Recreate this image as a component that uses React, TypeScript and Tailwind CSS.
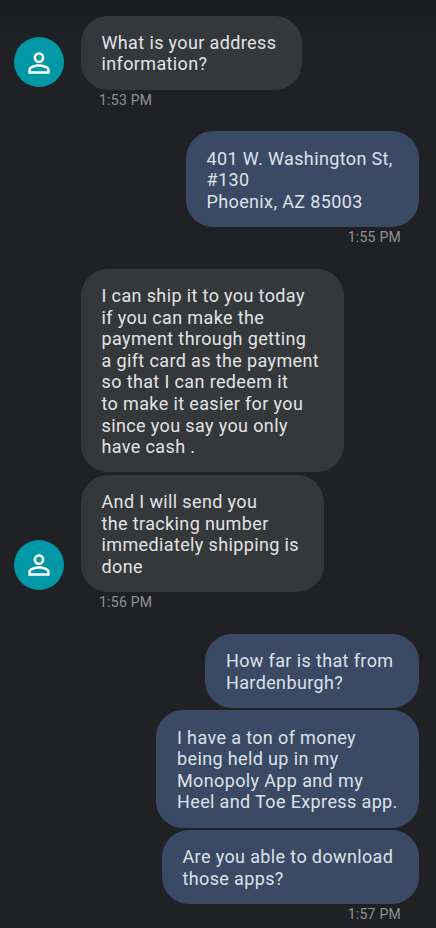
import React from 'react';
import { MdPersonOutline } from 'react-icons/md';

interface Message {
    lines: string[];
    width: string;
}

interface MessageGroup {
    from: 'them' | 'me';
    time: string;
    spacing: string;
    messages: Message[];
}

const groups: MessageGroup[] = [
    {
        from: 'them',
        time: '1:53 PM',
        spacing: 'mt-[15.6px]',
        messages: [{ lines: ['What is your address', 'information?'], width: 'w-[221px]' }],
    },
    {
        from: 'me',
        time: '1:55 PM',
        spacing: 'mt-[22.5px]',
        messages: [
            { lines: ['401 W. Washington St,', '#130', 'Phoenix, AZ 85003'], width: 'w-[233.5px]' },
        ],
    },
    {
        from: 'them',
        time: '1:56 PM',
        spacing: 'mt-[22.5px]',
        messages: [
            {
                lines: [
                    'I can ship it to you today',
                    'if you can make the',
                    'payment through getting',
                    'a gift card as the payment',
                    'so that I can redeem it',
                    'to make it easier for you',
                    'since you say you only',
                    'have cash .',
                ],
                width: 'w-[263.5px]',
            },
            {
                lines: ['And I will send you', 'the tracking number', 'immediately shipping is', 'done'],
                width: 'w-[243.5px]',
            },
        ],
    },
    {
        from: 'me',
        time: '1:57 PM',
        spacing: 'mt-[22.4px]',
        messages: [
            { lines: ['How far is that from', 'Hardenburgh?'], width: 'w-[214px]' },
            {
                lines: [
                    'I have a ton of money',
                    'being held up in my',
                    'Monopoly App and my',
                    'Heel and Toe Express app.',
                ],
                width: 'w-[263px]',
            },
            { lines: ['Are you able to download', 'those apps?'], width: 'w-[257.5px]' },
        ],
    },
];

const Avatar: React.FC = () => (
    <div className="flex size-[50px] shrink-0 items-center justify-center rounded-full bg-[#0097a7] pt-px text-white">
        <MdPersonOutline size={32} />
    </div>
);

const Bubble: React.FC<{ message: Message; mine: boolean }> = ({ message, mine }) => (
    <div
        className={`${message.width} rounded-[27px] pt-[16.2px] pb-[14.6px] pl-[21px] text-[18px] leading-[21.6px] tracking-[0.37px] whitespace-pre ${
            mine ? 'bg-[#3b4a64] text-[#dce1ea]' : 'bg-[#34383b] text-[#e2e3e5]'
        }`}
    >
        {message.lines.join('\n')}
    </div>
);

const Group: React.FC<{ group: MessageGroup }> = ({ group }) => {
    const mine = group.from === 'me';

    return (
        <section className={`${group.spacing} flex flex-col ${mine ? 'items-end' : 'items-start'}`}>
            <div className="flex items-end">
                {/* L'avatar sta in basso, accanto all'ultimo messaggio */}
                {!mine && (
                    <div className="mr-[16.5px] mb-[2.2px]">
                        <Avatar />
                    </div>
                )}
                <div className={`flex flex-col gap-[2.5px] ${mine ? 'items-end' : 'items-start'}`}>
                    {group.messages.map((message) => (
                        <Bubble key={message.lines[0]} message={message} mine={mine} />
                    ))}
                </div>
            </div>
            <time
                className={`mt-[1.4px] text-[14px] leading-[18px] tracking-[0.25px] text-[#8f9194] ${
                    mine ? 'mr-[18px]' : 'ml-[85px]'
                }`}
            >
                {group.time}
            </time>
        </section>
    );
};

const App: React.FC = () => (
    <main className="flex h-[928px] w-[436px] flex-col overflow-hidden bg-[#202124] bg-linear-to-b from-[#1a1b1e] to-[#202124] to-[40px] pr-[17px] pl-[14px] font-['Roboto',sans-serif]">
        {groups.map((group) => (
            <Group key={group.time} group={group} />
        ))}
    </main>
);

export default App;
